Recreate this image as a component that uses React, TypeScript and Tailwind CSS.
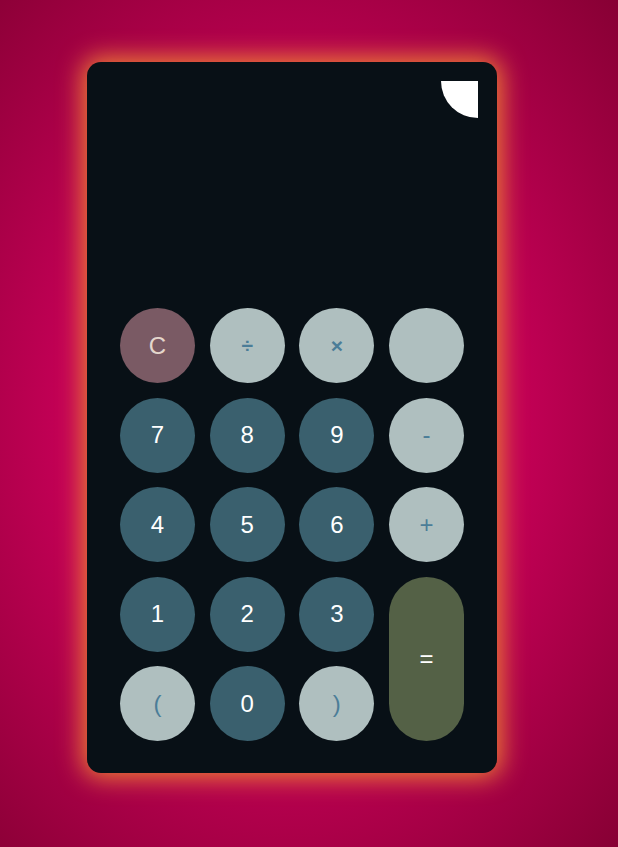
import React from "react";

type Key = { label: string; kind: "clear" | "op" | "num" | "eq"; small?: boolean };

const rows: Key[][] = [
  [
    { label: "C", kind: "clear" },
    { label: "÷", kind: "op", small: true },
    { label: "×", kind: "op", small: true },
    { label: "", kind: "op" },
  ],
  [
    { label: "7", kind: "num" },
    { label: "8", kind: "num" },
    { label: "9", kind: "num" },
    { label: "-", kind: "op" },
  ],
  [
    { label: "4", kind: "num" },
    { label: "5", kind: "num" },
    { label: "6", kind: "num" },
    { label: "+", kind: "op" },
  ],
];

const styles: Record<Key["kind"], string> = {
  clear: "bg-[#7a5a64] text-[#e4d6cc]",
  op: "bg-[#afbfbf] text-[#4b7d98]",
  num: "bg-[#3a606e] text-white",
  eq: "bg-[#546146] text-white",
};

function CalcKey({ k, className = "" }: { k: Key; className?: string }) {
  return (
    <button
      className={`flex items-center justify-center rounded-full ${k.small ? "text-[21px] font-bold" : "text-[24px]"} ${styles[k.kind]} ${className}`}
    >
      {k.label}
    </button>
  );
}

export default function App() {
  return (
    <div
      className="min-h-screen w-full bg-[radial-gradient(ellipse_at_47%_50%,#c4005a_0%,#c20055_50%,#870034_100%)] pl-[87px] pt-[62px]"
      style={{ fontFamily: '"Liberation Sans", Arial, sans-serif' }}
    >
      <div className="flex h-[711px] w-[410px] flex-col rounded-[14px] bg-[#081016] px-[33px] pb-[32px] shadow-[0_0_24px_5px_rgba(236,124,52,1)]">
        <div className="flex flex-1 justify-end pt-[19px]">
          <div className="mr-[-14px] h-[37px] w-[37px] rounded-tr-[2px] rounded-bl-full bg-white" />
        </div>
        <div className="grid grid-cols-4 gap-x-[14.67px] gap-y-[14.5px]">
          {rows.flat().map((k, i) => (
            <CalcKey key={i} k={k} className="h-[75px] w-[75px]" />
          ))}
          <CalcKey k={{ label: "1", kind: "num" }} className="h-[75px] w-[75px]" />
          <CalcKey k={{ label: "2", kind: "num" }} className="h-[75px] w-[75px]" />
          <CalcKey k={{ label: "3", kind: "num" }} className="h-[75px] w-[75px]" />
          <CalcKey k={{ label: "=", kind: "eq" }} className="row-span-2 w-[75px]" />
          <CalcKey k={{ label: "(", kind: "op" }} className="h-[75px] w-[75px]" />
          <CalcKey k={{ label: "0", kind: "num" }} className="h-[75px] w-[75px]" />
          <CalcKey k={{ label: ")", kind: "op" }} className="h-[75px] w-[75px]" />
        </div>
      </div>
    </div>
  );
}
